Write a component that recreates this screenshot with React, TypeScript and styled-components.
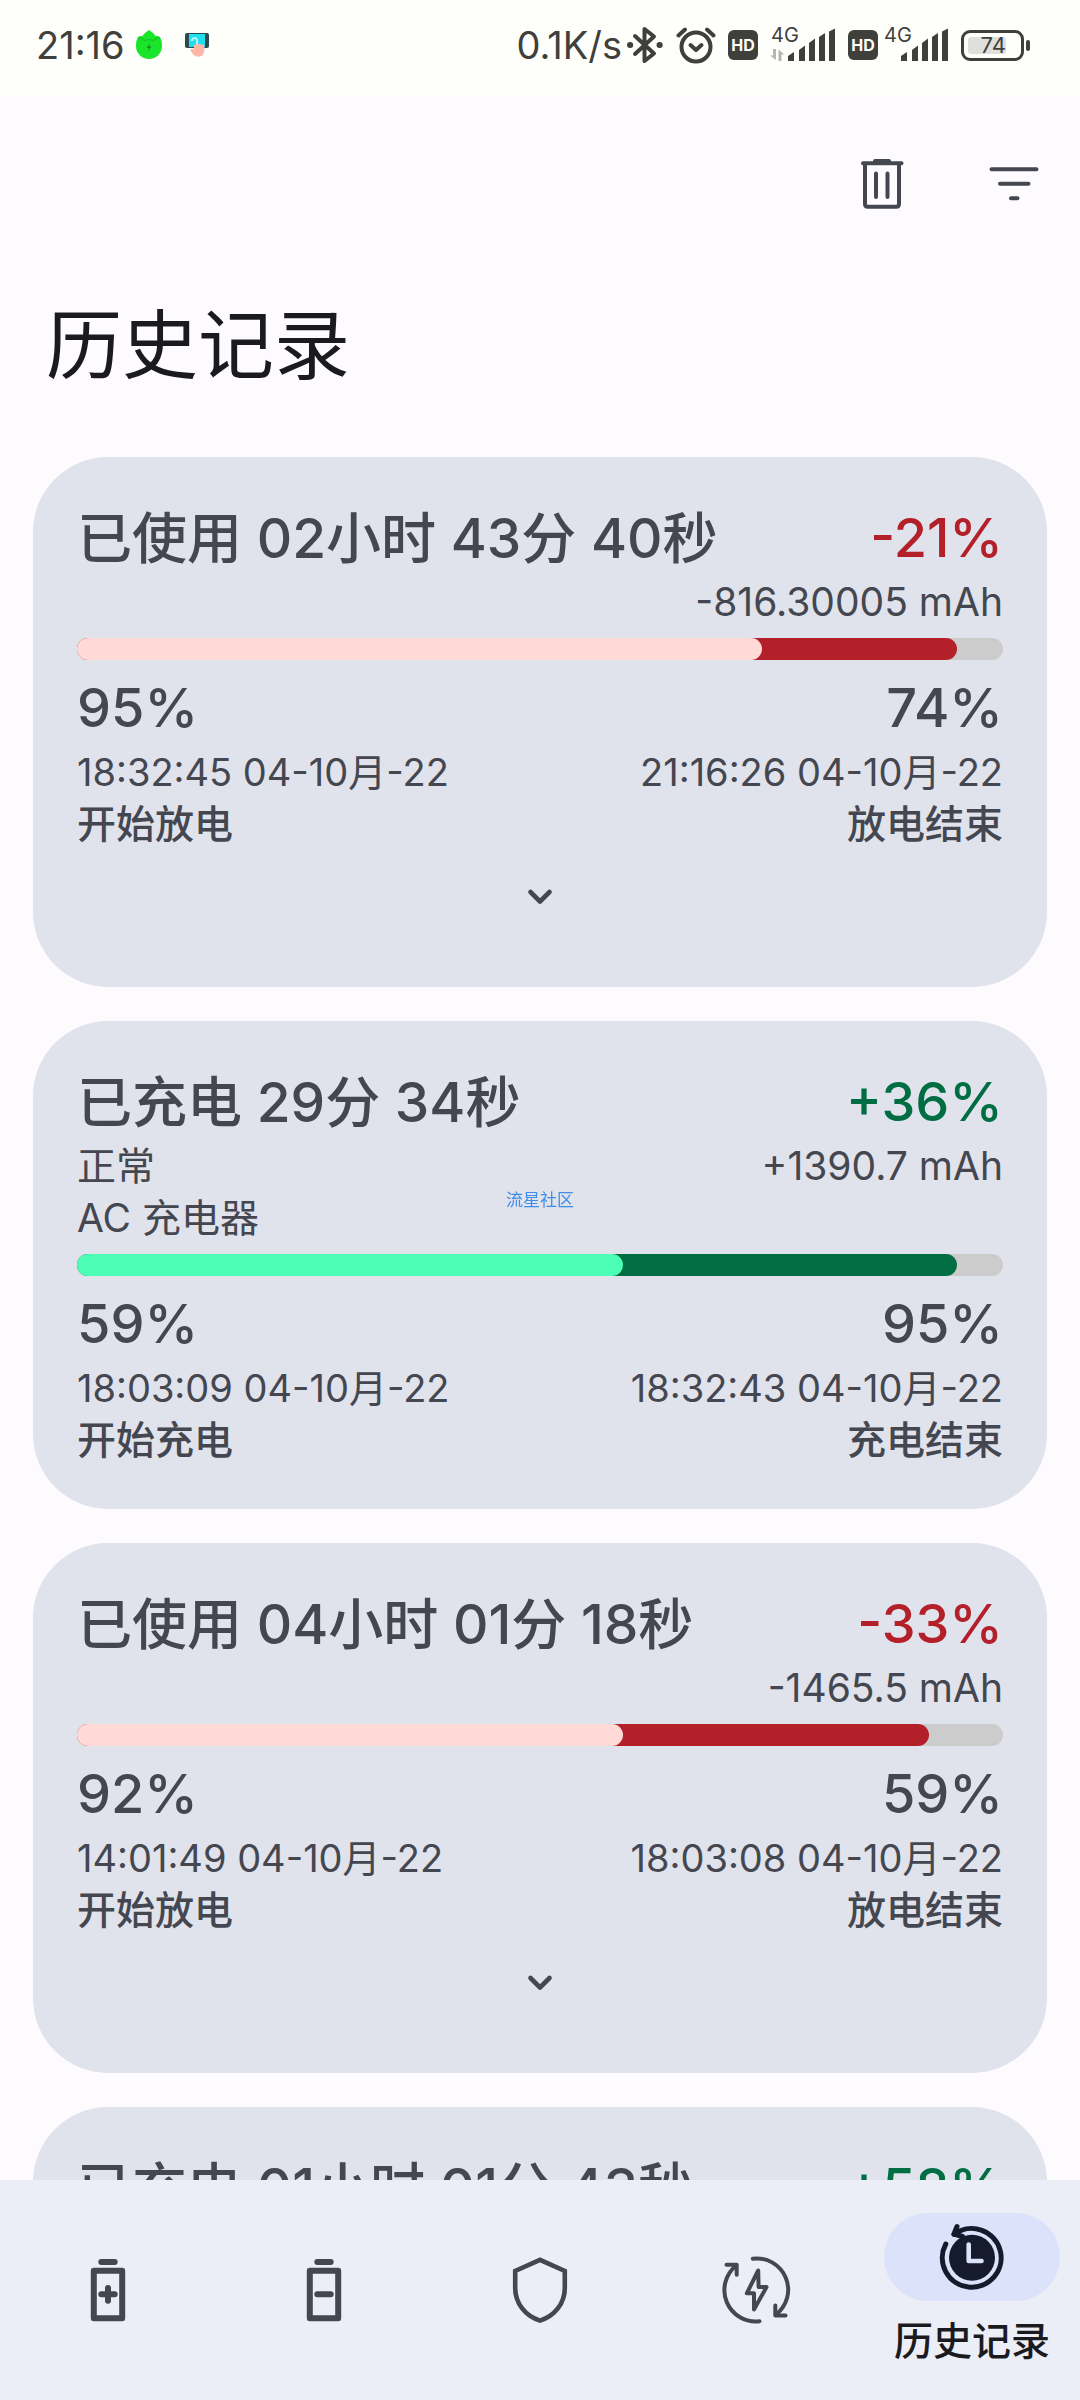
import React from "react";
import styled, { createGlobalStyle } from "styled-components";

const GlobalStyle = createGlobalStyle`
  *, *::before, *::after { box-sizing: border-box; }
  html, body { margin: 0; padding: 0; }
  body {
    background: #fefbff;
    color: #44474f;
    font-family: Inter, "Noto Sans CJK SC", sans-serif;
  }
  h1, h2, p, ul { margin: 0; padding: 0; }
  button { font: inherit; color: inherit; border: 0; background: none; padding: 0; cursor: pointer; }
`;

const Screen = styled.div`
  display: flex;
  flex-direction: column;
  height: 100vh;
`;

/* ---------- status bar ---------- */

const StatusBar = styled.div`
  flex: none;
  display: flex;
  align-items: center;
  justify-content: space-between;
  height: 96px;
  padding: 0 50px 6px 36px;
  background: #fefffa;
  color: #3f403c;
`;

const StatusGroup = styled.div<{ $gap: number }>`
  display: flex;
  align-items: center;
  gap: ${(p) => p.$gap}px;
`;

const StatusText = styled.span`
  font-size: 38px;
  line-height: 48px;
`;

const HdBadge = styled.span`
  display: flex;
  align-items: center;
  justify-content: center;
  width: 30px;
  height: 30px;
  border-radius: 6px;
  background: #3f403c;
  color: #fefffa;
  font-size: 16px;
  font-weight: 700;
`;

const Signal = styled.span`
  position: relative;
  display: flex;
  width: 66px;
  height: 40px;
`;

const SignalLabel = styled.span`
  position: absolute;
  left: 1px;
  top: 0;
  font-size: 20px;
  line-height: 20px;
`;

const BatteryBox = styled.span`
  display: flex;
  align-items: center;
  gap: 2px;
`;

const BatteryShell = styled.span`
  display: flex;
  width: 63px;
  height: 31px;
  padding: 4px;
  border: 3px solid #3f403c;
  border-radius: 9px;
`;

const BatteryFill = styled.span`
  display: flex;
  align-items: center;
  justify-content: flex-end;
  width: 38px;
  border-radius: 3px;
  background: #dfe0db;
  font-size: 22px;
  line-height: 20px;
`;

const BatteryNub = styled.span`
  width: 4px;
  height: 11px;
  border-radius: 2px;
  background: #3f403c;
`;

/* ---------- header ---------- */

const Content = styled.main`
  flex: 1;
  min-height: 0;
  overflow-y: auto;
  scrollbar-width: none;
`;

const Toolbar = styled.div`
  display: flex;
  justify-content: flex-end;
  height: 176px;
`;

const ToolButton = styled.button`
  display: flex;
  align-items: center;
  justify-content: center;
  width: 132px;
`;

const PageTitle = styled.h1`
  padding: 23px 46px 62px;
  color: #1b1b1f;
  font-size: 76px;
  line-height: 100px;
  font-weight: 400;
`;

/* ---------- cards ---------- */

const CardList = styled.ul`
  display: flex;
  flex-direction: column;
  gap: 34px;
  padding: 0 33px 34px;
  list-style: none;
`;

const Card = styled.li`
  display: flex;
  flex-direction: column;
  padding: 43px 44px;
  border-radius: 75px;
  background: #e0e2ec;
`;

const Row = styled.div`
  display: flex;
  justify-content: space-between;
`;

const Column = styled.div<{ $end?: boolean }>`
  display: flex;
  flex-direction: column;
  align-items: ${(p) => (p.$end ? "flex-end" : "flex-start")};
`;

const Big = styled.p<{ $color?: string }>`
  color: ${(p) => p.$color || "inherit"};
  font-size: 54px;
  line-height: 76px;
  font-weight: 500;
  white-space: nowrap;
`;

const Title = styled(Big)`
  font-size: 55px;
`;

const Small = styled.p<{ $strong?: boolean }>`
  font-size: 39px;
  line-height: 52px;
  font-weight: ${(p) => (p.$strong ? 500 : 400)};
  white-space: nowrap;
`;

const Stamp = styled(Small)`
  font-size: 38px;
`;

const Track = styled.div`
  display: grid;
  height: 22px;
  margin: 10px 0;
  border-radius: 11px;
  background: #cccccc;
`;

const Fill = styled.div<{ $color: string }>`
  grid-area: 1 / 1;
  height: 22px;
  border-radius: 11px;
  background: ${(p) => p.$color};
`;

const ExpandButton = styled.button`
  display: flex;
  align-items: center;
  justify-content: center;
  height: 94px;
`;

/* ---------- navigation ---------- */

const Nav = styled.nav`
  flex: none;
  display: grid;
  grid-template-columns: repeat(5, 1fr);
  height: 220px;
  background: #ebeef7;
`;

const NavButton = styled.button<{ $active?: boolean }>`
  display: flex;
  flex-direction: column;
  align-items: center;
  justify-content: center;
  gap: 14px;
  color: ${(p) => (p.$active ? "#1b1b1f" : "#44474f")};
`;

const Pill = styled.span`
  display: flex;
  align-items: center;
  justify-content: center;
  width: 176px;
  height: 88px;
  border-radius: 44px;
  background: #dce2f9;
`;

const NavLabel = styled.span`
  font-size: 39px;
  line-height: 52px;
  font-weight: 500;
`;

const Watermark = styled.span`
  position: fixed;
  left: 50%;
  top: 50%;
  transform: translate(-50%, -50%);
  color: #3f8fe8;
  font-size: 17px;
  line-height: 20px;
  pointer-events: none;
`;

/* ---------- icons ---------- */

const Icon = ({ children, width = 4, size = 72 }: { children: React.ReactNode; width?: number; size?: number }) => (
  <svg
    width={size}
    height={size}
    viewBox="0 0 72 72"
    fill="none"
    stroke="currentColor"
    strokeWidth={width}
    strokeLinecap="round"
    strokeLinejoin="round"
    aria-hidden="true"
  >
    {children}
  </svg>
);

const TrashIcon = () => (
  <Icon width={4}>
    <path d="M17 15.3H55.5M29 13H43M19 16V56Q19 58.8 21.8 58.8H50.2Q53 58.8 53 56V16M30 25.5V49M41.5 25.5V49" />
  </Icon>
);

const FilterIcon = () => (
  <Icon width={4}>
    <path d="M13.5 21.3H58.5M22 35.7H50.5M33 50.3H39.5" />
  </Icon>
);

const BatteryIcon = ({ plus }: { plus?: boolean }) => (
  <Icon width={6}>
    <rect x="21.8" y="16.8" width="28.4" height="47.4" />
    <path d={plus ? "M29.3 8H42.7M29.3 40.3H42.7M36 34V46.8" : "M29.3 8H42.7M29.3 40.3H42.7"} />
  </Icon>
);

const ShieldIcon = () => (
  <Icon width={4.6}>
    <path strokeLinejoin="miter" d="M36 5.8L11.2 17V34C11.2 49 21 62 36 66.6C51 62 60.8 49 60.8 34V17Z" />
  </Icon>
);

const CycleIcon = () => (
  <Icon width={4}>
    <path d="M32.8 4.7A31.3 31.3 0 0 1 56 60.5M39.5 67.2A31.3 31.3 0 0 1 16 11.8" />
    <path d="M6.5 10.7H16.7V20.7M55.3 51.5V61.5H65.5" />
    <path d="M38.2 16.5L26.8 39.3H34V55.5L46.5 33H38.6Z" />
  </Icon>
);

const HistoryIcon = () => (
  <Icon width={5}>
    <path stroke="#151b2c" d="M9.8 23A29.4 29.4 0 1 0 18 13.4" strokeDasharray="none" />
    <path stroke="#151b2c" d="M21 5.5L18 13L26.5 15.5" />
    <circle cx="36" cy="36.7" r="23" fill="#151b2c" stroke="none" />
    <path stroke="#dce2f9" strokeWidth="4.6" d="M32.7 23.5V40H45.5" />
  </Icon>
);

const ChevronIcon = () => (
  <Icon width={4.6}>
    <path d="M26.5 31L36 40.5L45.5 31" />
  </Icon>
);

const LeafIcon = () => (
  <svg width="28" height="30" viewBox="0 0 28 30" aria-hidden="true">
    <path d="M14 0C17 2 19.500 4 20.500 6Q23.500 5.500 25 7Q27.500 11 27 16A13 13 0 0 1 1 16Q.5 11 3 7Q4.500 5.500 7.500 6C8.500 4 11 2 14 0Z" fill="#1be52b" />
    <path d="M3 8Q8 8 9.500 11Q14 8 18.500 11Q20 8 25 8" fill="none" stroke="#16c926" strokeWidth="1.500" />
    <path d="M15 13L11.500 18H14L13 21.500L16.500 16.500H14Z" fill="#128f20" />
  </svg>
);

const TouchIcon = () => (
  <svg width="24" height="26" viewBox="0 0 24 26" aria-hidden="true">
    <rect y="1" width="24" height="15" rx="2" fill="#2e4a4d" />
    <rect x="4" y="2" width="16" height="13" fill="#20dff0" />
    <path d="M7 9Q7 6 10 6Q12 6 12 9V13" fill="none" stroke="#b8f4fa" strokeWidth="2" />
    <path d="M9 13Q13 11 19 13Q20.500 19 17.500 23.500Q13 26 8.500 23L5.500 18.500Q5 16 9 17Z" fill="#ffb8a6" />
  </svg>
);

const BluetoothIcon = () => (
  <svg width="38" height="40" viewBox="0 0 38 40" fill="none" stroke="currentColor" strokeWidth="4" strokeLinejoin="round" strokeLinecap="round" aria-hidden="true">
    <path d="M9 11L28 28.500L18.500 36V4L28 11.500L9 29" />
    <path d="M4 20H4.200M33.500 20H33.700" strokeWidth="6" />
  </svg>
);

const AlarmIcon = () => (
  <svg width="40" height="40" viewBox="0 0 40 40" fill="none" stroke="currentColor" strokeWidth="4" strokeLinecap="round" strokeLinejoin="round" aria-hidden="true">
    <circle cx="20" cy="22" r="14.500" />
    <path d="M14.500 20L20 25L25.500 20" />
    <path d="M2.500 10.500L9 4.500M37.500 10.500L31 4.500" />
  </svg>
);

const SignalBars = ({ data }: { data?: boolean }) => (
  <svg width="66" height="40" viewBox="0 0 66 40" fill="currentColor" aria-hidden="true">
    <path d="M18 36V31L24 27V36ZM29 36V25L35 20.500V36ZM39 36V18L45 13.500V36ZM49 36V12L55 8V36ZM59 36V6.500L65 3.500V36Z" />
    {data && <path fill="#b5b6b1" d="M3 24H6V35L0 30.500H3ZM8.500 36V24.500L14.500 29.500H11.500V36Z" />}
  </svg>
);

/* ---------- data ---------- */

type Session = {
  title: string;
  change: string;
  capacity: string;
  notes: string[];
  from: number;
  to: number;
  start: string;
  end: string;
  charging: boolean;
};

const sessions: Session[] = [
  {
    title: "已使用 02小时 43分 40秒",
    change: "-21%",
    capacity: "-816.30005 mAh",
    notes: [],
    from: 95,
    to: 74,
    start: "18:32:45 04-10月-22",
    end: "21:16:26 04-10月-22",
    charging: false,
  },
  {
    title: "已充电 29分 34秒",
    change: "+36%",
    capacity: "+1390.7 mAh",
    notes: ["正常", "AC 充电器"],
    from: 59,
    to: 95,
    start: "18:03:09 04-10月-22",
    end: "18:32:43 04-10月-22",
    charging: true,
  },
  {
    title: "已使用 04小时 01分 18秒",
    change: "-33%",
    capacity: "-1465.5 mAh",
    notes: [],
    from: 92,
    to: 59,
    start: "14:01:49 04-10月-22",
    end: "18:03:08 04-10月-22",
    charging: false,
  },
];

const SessionCard = ({ s }: { s: Session }) => {
  const low = Math.min(s.from, s.to);
  const high = Math.max(s.from, s.to);
  const strong = s.charging ? "#006d42" : "#b3202a";
  const light = s.charging ? "#4dffb4" : "#ffdad6";
  const verb = s.charging ? "充电" : "放电";
  return (
    <Card>
      <Row>
        <Title as="h2">{s.title}</Title>
        <Big $color={strong}>{s.change}</Big>
      </Row>
      <Row>
        <Column>
          {s.notes.map((n) => (
            <Small key={n}>{n}</Small>
          ))}
        </Column>
        <Small>{s.capacity}</Small>
      </Row>
      <Track>
        <Fill $color={strong} style={{ width: `${high}%` }} />
        <Fill $color={light} style={{ width: `${low}%` }} />
      </Track>
      <Row>
        <Column>
          <Big>{s.from}%</Big>
          <Stamp>{s.start}</Stamp>
          <Small $strong>开始{verb}</Small>
        </Column>
        <Column $end>
          <Big>{s.to}%</Big>
          <Stamp>{s.end}</Stamp>
          <Small $strong>{verb}结束</Small>
        </Column>
      </Row>
      {!s.charging && (
        <ExpandButton aria-label="展开">
          <ChevronIcon />
        </ExpandButton>
      )}
    </Card>
  );
};

export default function App() {
  return (
    <Screen>
      <GlobalStyle />
      <StatusBar>
        <StatusGroup $gap={22}>
          <StatusGroup $gap={10}>
            <StatusText>21:16</StatusText>
            <LeafIcon />
          </StatusGroup>
          <TouchIcon />
        </StatusGroup>
        <StatusGroup $gap={12}>
          <StatusGroup $gap={4}>
            <StatusText>0.1K/s</StatusText>
            <BluetoothIcon />
          </StatusGroup>
          <AlarmIcon />
          <HdBadge>HD</HdBadge>
          <Signal>
            <SignalBars data />
            <SignalLabel>4G</SignalLabel>
          </Signal>
          <StatusGroup $gap={5}>
            <HdBadge>HD</HdBadge>
            <Signal>
              <SignalBars />
              <SignalLabel>4G</SignalLabel>
            </Signal>
          </StatusGroup>
          <BatteryBox>
            <BatteryShell>
              <BatteryFill>74</BatteryFill>
            </BatteryShell>
            <BatteryNub />
          </BatteryBox>
        </StatusGroup>
      </StatusBar>
      <Content>
        <Toolbar>
          <ToolButton aria-label="删除">
            <TrashIcon />
          </ToolButton>
          <ToolButton aria-label="筛选">
            <FilterIcon />
          </ToolButton>
        </Toolbar>
        <PageTitle>历史记录</PageTitle>
        <CardList>
          {sessions.map((s) => (
            <SessionCard key={s.start} s={s} />
          ))}
          <Card>
            <Row>
              <Title as="h2">已充电 01小时 01分 43秒</Title>
              <Big $color="#006d42">+58%</Big>
            </Row>
          </Card>
        </CardList>
      </Content>
      <Nav>
        <NavButton aria-label="充电">
          <BatteryIcon plus />
        </NavButton>
        <NavButton aria-label="放电">
          <BatteryIcon />
        </NavButton>
        <NavButton aria-label="健康">
          <ShieldIcon />
        </NavButton>
        <NavButton aria-label="循环">
          <CycleIcon />
        </NavButton>
        <NavButton $active aria-current="page">
          <Pill>
            <HistoryIcon />
          </Pill>
          <NavLabel>历史记录</NavLabel>
        </NavButton>
      </Nav>
      <Watermark>流星社区</Watermark>
    </Screen>
  );
}
